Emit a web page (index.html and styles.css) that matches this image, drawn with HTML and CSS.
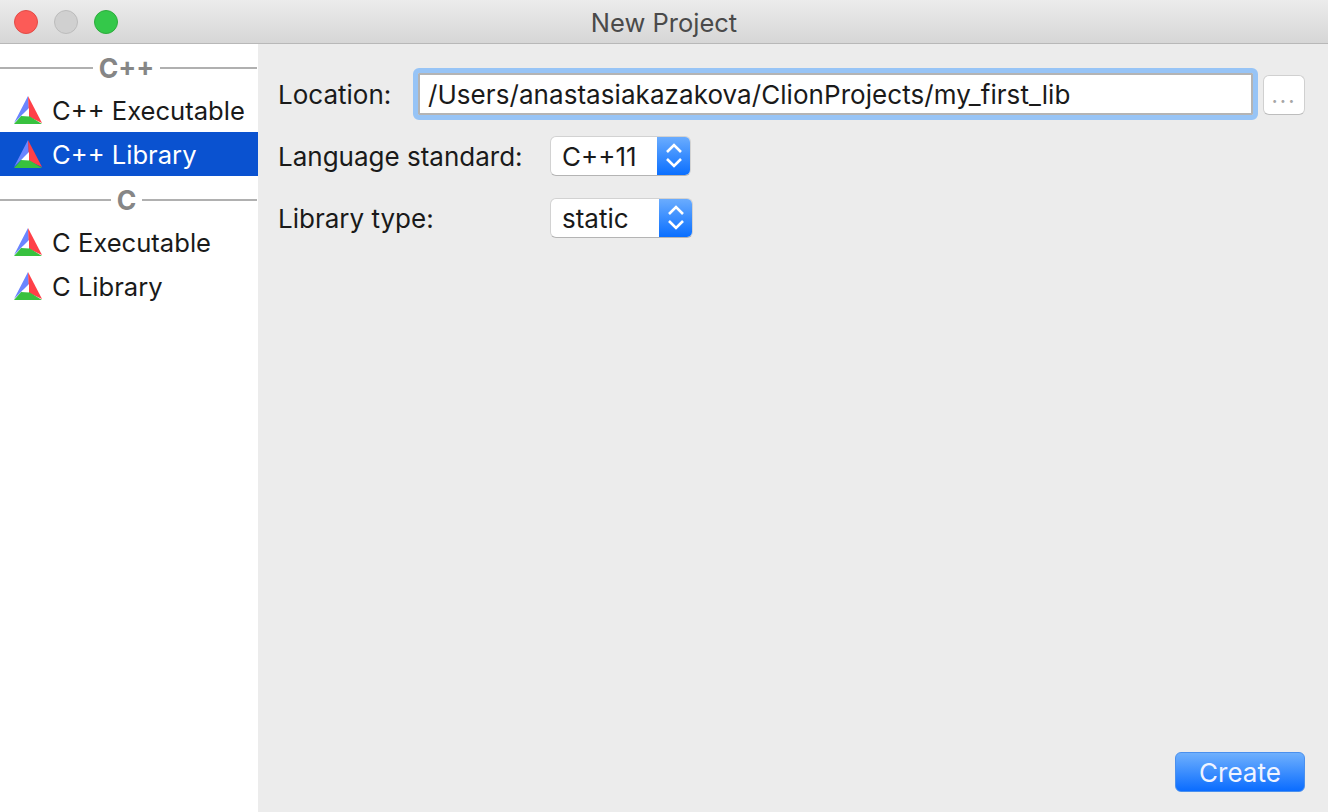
FILE: index.html
```html
<!DOCTYPE html>
<html lang="en">
<head>
    <meta charset="UTF-8">
    <title>New Project</title>
    <link rel="stylesheet" href="styles.css">
</head>
<body>
    <svg class="defs" width="0" height="0">
        <symbol id="clion" viewBox="0 0 28 28">
            <path fill="#6b85ff" d="M14 0 L0 27 L8 19 L15 14Z"/>
            <path fill="#ff4048" d="M14 0 L28 27 L15 21Z"/>
            <path fill="#38c13f" d="M0 28 L28 28 L15 20 L8 19Z"/>
            <path class="clion-core" d="M7 20 L15 12 L15 20.500Z"/>
        </symbol>
    </svg>
    <header class="titlebar">
        <div class="lights">
            <span class="light red"></span>
            <span class="light grey"></span>
            <span class="light green"></span>
        </div>
        <div class="title">New Project</div>
    </header>
    <div class="window">
        <aside class="sidebar">
            <div class="sep"><span>C++</span></div>
            <div class="item">
                <svg class="icon"><use href="#clion"/></svg><span class="name">C++ Executable</span>
            </div>
            <div class="item selected">
                <svg class="icon"><use href="#clion"/></svg><span class="name">C++ Library</span>
            </div>
            <div class="sep"><span>C</span></div>
            <div class="item">
                <svg class="icon"><use href="#clion"/></svg><span class="name">C Executable</span>
            </div>
            <div class="item">
                <svg class="icon"><use href="#clion"/></svg><span class="name">C Library</span>
            </div>
        </aside>
        <main class="content">
            <div class="row row-location">
                <label class="label-location">Location:</label>
                <div class="input">/Users/anastasiakazakova/ClionProjects/my_first_lib</div>
                <div class="browse">...</div>
            </div>
            <div class="row row-select">
                <label class="label-select">Language standard:</label>
                <div class="select select-lang">
                    <span class="value">C++11</span>
                    <span class="stepper">
                        <svg width="20" height="28" viewBox="0 0 20 28"><path d="M3 10 L10 3 L17 10 M3 17 L10 24 L17 17"/></svg>
                    </span>
                </div>
            </div>
            <div class="row row-select">
                <label class="label-select">Library type:</label>
                <div class="select select-type">
                    <span class="value">static</span>
                    <span class="stepper">
                        <svg width="20" height="28" viewBox="0 0 20 28"><path d="M3 10 L10 3 L17 10 M3 17 L10 24 L17 17"/></svg>
                    </span>
                </div>
            </div>
            <div class="footer">
                <button class="create">Create</button>
            </div>
        </main>
    </div>
</body>
</html>
```

FILE: styles.css
```css
html, body {
    margin: 0;
    padding: 0;
    height: 812px;
    overflow: hidden;
}
body {
    font-family: Inter, "Liberation Sans", sans-serif;
    font-size: 26px;
    color: #1a1a1a;
    background-color: #ececec;
    display: flex;
    flex-direction: column;
}
.defs {
    position: absolute;
}
.titlebar {
    height: 43px;
    flex: none;
    display: flex;
    align-items: center;
    position: relative;
    background: linear-gradient(#ececec, #d6d6d6);
    border-bottom: 1px solid #b8b8b8;
}
.lights {
    display: flex;
    gap: 16px;
    padding-left: 14px;
}
.light {
    width: 22px;
    height: 22px;
    border-radius: 50%;
    border: 1px solid;
}
.red {
    background-color: #fc5b57;
    border-color: #e24b46;
}
.grey {
    background-color: #d0d0d0;
    border-color: #bcbcbc;
}
.green {
    background-color: #34c84a;
    border-color: #2dac3d;
}
.title {
    position: absolute;
    left: 0;
    right: 0;
    padding-top: 2px;
    text-align: center;
    color: #4a4a4a;
    font-size: 25.500px;
}
.window {
    flex: 1;
    display: flex;
}
.sidebar {
    width: 258px;
    flex: none;
    background-color: #fff;
}
.sep {
    height: 44px;
    display: flex;
    align-items: center;
    gap: 6px;
    padding-top: 4px;
    padding-right: 1px;
    box-sizing: border-box;
    color: #868686;
    font-weight: 700;
    font-size: 26.500px;
}
.sep::before, .sep::after {
    content: "";
    flex: 1 1 0;
    height: 2px;
    background-color: #b0b0b0;
}
.sep::after {
    flex-basis: 4px;
}
.item {
    height: 44px;
    display: flex;
    align-items: center;
    gap: 10px;
    padding-left: 14px;
}
.name {
    font-size: 25.600px;
    padding-top: 1px;
}
.icon {
    width: 28px;
    height: 28px;
    flex: none;
}
.clion-core {
    fill: #fff;
}
.selected {
    background-color: #0a52d0;
    color: #fff;
}
.selected .clion-core {
    fill: #1a4bb0;
}
.content {
    flex: 1;
    display: flex;
    flex-direction: column;
    padding: 0 23px 20px 20px;
}
.row {
    display: flex;
    align-items: center;
}
.row-location {
    margin-top: 25px;
    height: 50px;
}
.label-location {
    width: 136px;
    flex: none;
}
.input {
    flex: 1;
    height: 42px;
    box-sizing: border-box;
    margin-left: 4px;
    margin-right: 10px;
    padding-left: 8px;
    line-height: 40px;
    letter-spacing: 0.060px;
    background-color: #fff;
    border: 2px solid #b4b4b4;
    outline: 5px solid #97c4f6;
    border-radius: 1px;
}
.browse {
    width: 42px;
    height: 40px;
    margin-top: 2px;
    flex: none;
    box-sizing: border-box;
    text-align: center;
    line-height: 38px;
    color: #a6a6a6;
    letter-spacing: 2px;
    font-size: 22px;
    background-color: #fff;
    border: 1px solid #d0d0d0;
    border-bottom-color: #bdbdbd;
    border-radius: 6px;
}
.row-select {
    height: 40px;
    margin-top: 22px;
}
.row-location + .row-select {
    margin-top: 17px;
}
.label-select {
    width: 272px;
    flex: none;
}
.select {
    height: 40px;
    box-sizing: border-box;
    display: flex;
    justify-content: space-between;
    background-color: #fff;
    border: 1px solid #d2d2d2;
    border-bottom-color: #b4b4b4;
    border-radius: 6px;
    overflow: hidden;
}
.select-lang {
    width: 141px;
}
.select-type {
    width: 143px;
}
.value {
    padding-left: 11px;
    line-height: 40px;
}
.stepper {
    width: 33px;
    display: flex;
    align-items: center;
    justify-content: center;
    background: linear-gradient(#6aacfe, #0a6fff);
}
.stepper path {
    fill: none;
    stroke: #fff;
    stroke-width: 2.600;
}
.footer {
    margin-top: auto;
    display: flex;
    justify-content: flex-end;
}
.create {
    width: 130px;
    height: 40px;
    font-family: inherit;
    font-size: 26px;
    color: #f0f4ff;
    padding: 0;
    background: linear-gradient(#6fb0fd, #0a6cff);
    border: 1px solid #4a90ee;
    border-radius: 6px;
}
```
